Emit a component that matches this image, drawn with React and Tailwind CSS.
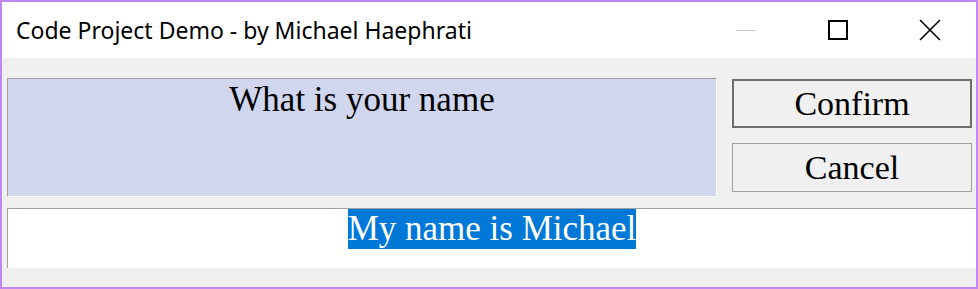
export default function App() {
  return (
    <div className="w-[978px] h-[289px] border-2 border-[#c387f5] bg-[#f0f0f0] flex flex-col overflow-hidden">
      {/* Title bar */}
      <div className="h-[56px] bg-white flex items-center shrink-0">
        <div className="flex-1 pl-[14px] text-[23px] text-black" style={{ fontFamily: '"Noto Sans", "Open Sans", sans-serif' }}>
          Code Project Demo - by Michael Haephrati
        </div>
        <div className="w-[92px] h-full flex items-center justify-center">
          <div className="w-[20px] h-[1px] bg-[#c8c8c8]" />
        </div>
        <div className="w-[92px] h-full flex items-center justify-center">
          <div className="w-[20px] h-[20px] border-2 border-black" />
        </div>
        <div className="w-[92px] h-full flex items-center justify-center">
          <svg width="22" height="22" viewBox="0 0 22 22">
            <path d="M1 1 L21 21 M21 1 L1 21" stroke="#000" strokeWidth="1.6" />
          </svg>
        </div>
      </div>

      {/* Body */}
      <div className="flex-1 flex flex-col pl-[5px] pt-[20px]" style={{ fontFamily: '"Liberation Serif", "Times New Roman", serif' }}>
        <div className="flex gap-[15px] h-[119px]">
          <div className="w-[710px] h-full bg-[#cfd6ee] border-t border-l border-[#a0a0a0] border-b border-r border-b-white border-r-white text-center text-[35px] leading-none pt-[3px] text-black">
            What is your name
          </div>
          <div className="flex flex-col gap-[15px] pt-[1px]">
            <button className="w-[240px] h-[49px] bg-[#f0f0f0] border-2 border-[#6d6d6d] text-[34px] leading-none text-black">
              Confirm
            </button>
            <button className="w-[240px] h-[49px] bg-[#f0f0f0] border border-[#a0a0a0] text-[34px] leading-none text-black">
              Cancel
            </button>
          </div>
        </div>
        <div className="mt-[11px] h-[60px] bg-white border-t border-l border-[#a0a0a0] flex justify-center">
          <span className="bg-[#0078d7] text-white text-[35px] h-[40px] leading-[40px]">My name is Michael</span>
        </div>
      </div>
    </div>
  );
}
